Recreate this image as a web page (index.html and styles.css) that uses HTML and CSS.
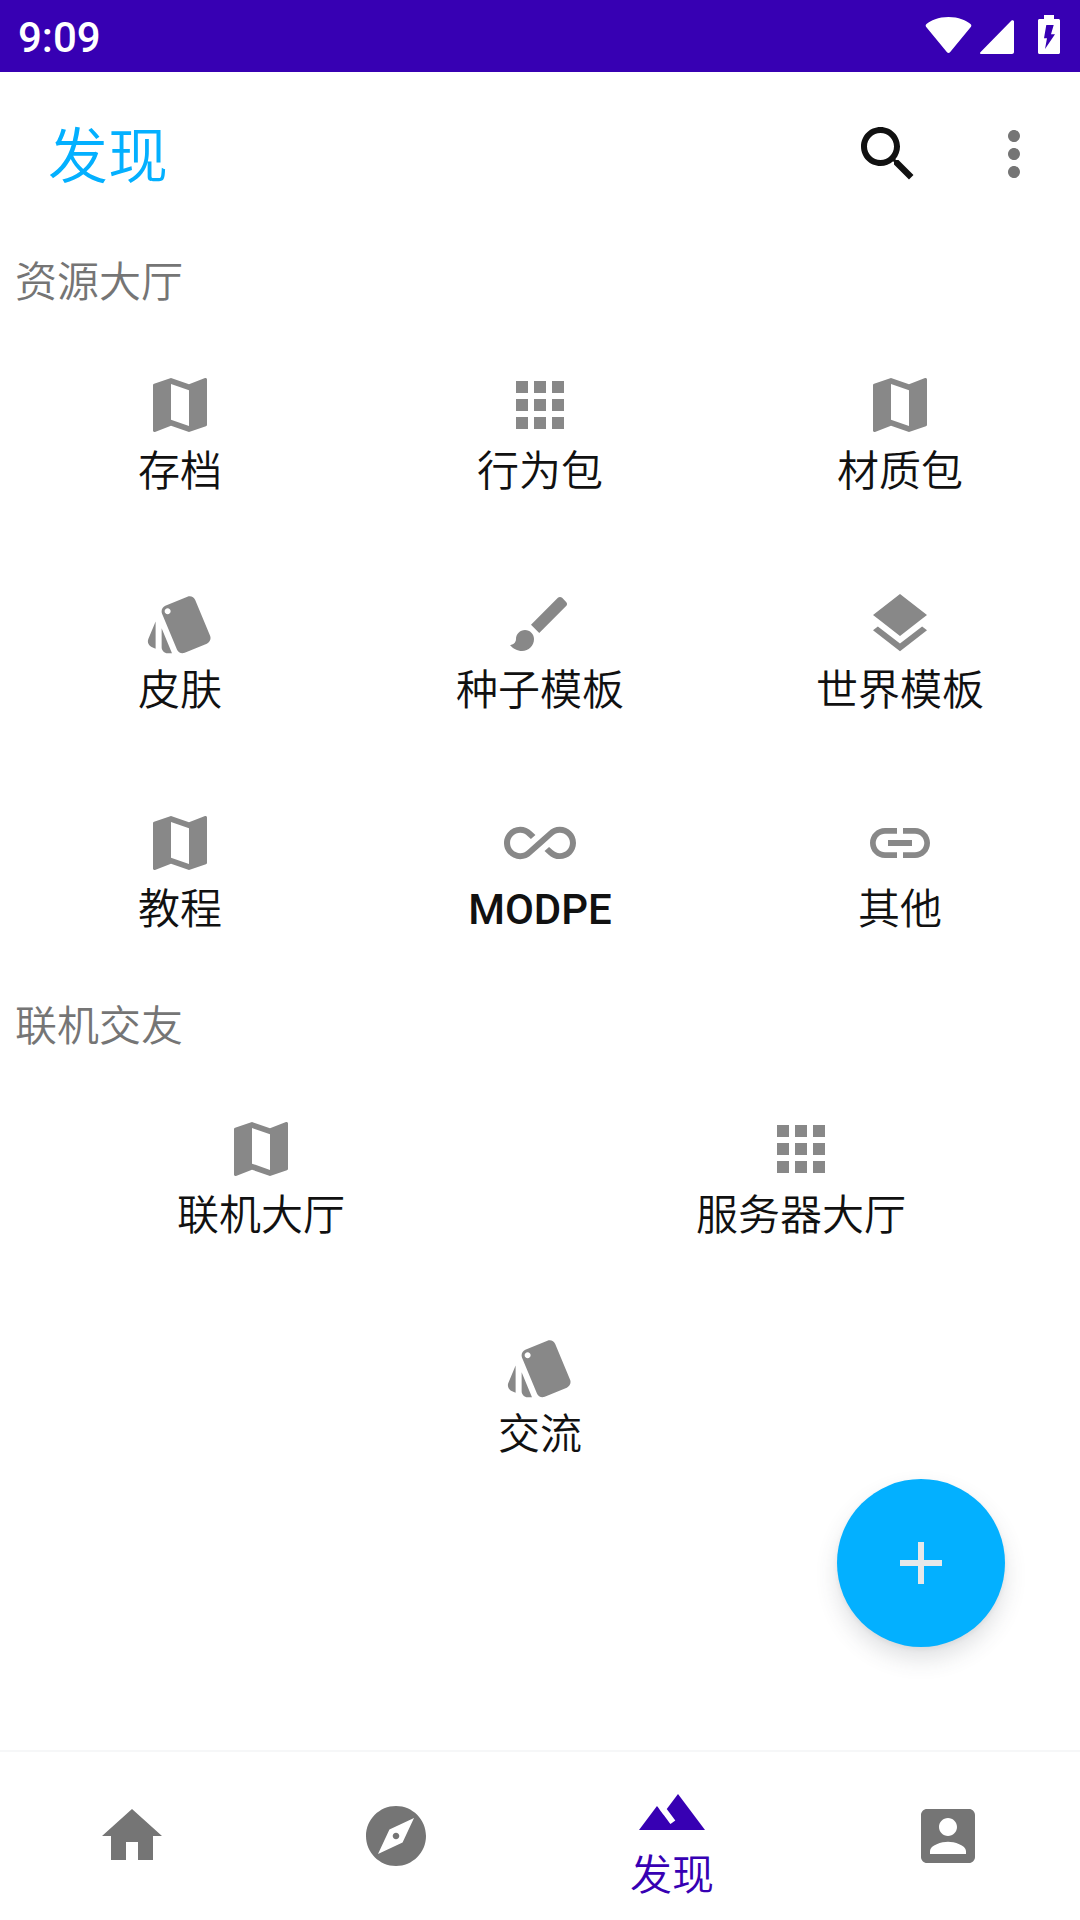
FILE: index.html
```html
<!DOCTYPE html>
<html>
	<head>
		<meta charset="utf-8">
		<title>发现</title>
		<link rel="stylesheet" href="styles.css">
	</head>
	<body>
	<svg class="defs" width="0" height="0">
		<symbol id="i-map" viewBox="0 0 24 24"><path d="M20.5 3l-.16.03L15 5.1 9 3 3.36 4.9c-.21.07-.36.25-.36.48V20.5c0 .28.22.5.5.5l.16-.03L9 18.9l6 2.1 5.64-1.9c.21-.07.36-.25.36-.48V3.5c0-.28-.22-.5-.5-.5zM15 19l-6-2.11V5l6 2.11V19z"/></symbol>
		<symbol id="i-apps" viewBox="0 0 24 24"><path d="M4 8h4V4H4v4zm6 12h4v-4h-4v4zm-6 0h4v-4H4v4zm0-6h4v-4H4v4zm6 0h4v-4h-4v4zm6-10v4h4V4h-4zm-6 4h4V4h-4v4zm6 6h4v-4h-4v4zm0 6h4v-4h-4v4z"/></symbol>
		<symbol id="i-style" viewBox="0 0 24 24"><path d="M2.53 19.65l1.34.56v-9.03l-2.43 5.86c-.41 1.02.08 2.19 1.09 2.61zm19.5-3.7L17.07 3.98c-.31-.75-1.04-1.21-1.81-1.23-.26 0-.53.04-.79.15L7.1 5.95c-.75.31-1.21 1.03-1.23 1.8-.01.27.04.54.15.8l4.96 11.97c.31.76 1.05 1.22 1.83 1.23.26 0 .52-.05.77-.15l7.36-3.05c1.02-.42 1.51-1.59 1.09-2.6zM7.88 8.75c-.55 0-1-.45-1-1s.45-1 1-1 1 .45 1 1-.45 1-1 1zm-2 11c0 1.1.9 2 2 2h1.45l-3.45-8.34v6.34z"/></symbol>
		<symbol id="i-brush" viewBox="0 0 24 24"><path d="M7 14c-1.66 0-3 1.34-3 3 0 1.31-1.16 2-2 2 .92 1.22 2.49 2 4 2 2.21 0 4-1.79 4-4 0-1.66-1.34-3-3-3zm13.71-9.37l-1.34-1.34c-.39-.39-1.02-.39-1.41 0L9 12.25 11.75 15l8.96-8.96c.39-.39.39-1.02 0-1.41z"/></symbol>
		<symbol id="i-layers" viewBox="0 0 24 24"><path d="M11.99 18.54l-7.37-5.73L3 14.07l9 7 9-7-1.63-1.27-7.38 5.74zM12 16l7.36-5.73L21 9l-9-7-9 7 1.63 1.27L12 16z"/></symbol>
		<symbol id="i-infinity" viewBox="0 0 24 24"><path d="M18.6 6.62c-1.44 0-2.8.56-3.77 1.53L12 10.66 10.48 12h.01L7.8 14.39c-.64.64-1.49.99-2.4.99-1.87 0-3.39-1.51-3.39-3.38S3.53 8.62 5.4 8.62c.91 0 1.76.35 2.44 1.03l1.13 1 1.51-1.34L9.22 8.2C8.2 7.18 6.84 6.62 5.4 6.62 2.42 6.62 0 9.04 0 12s2.42 5.38 5.4 5.38c1.44 0 2.8-.56 3.77-1.53l2.83-2.5.01.01L13.52 12h-.01l2.69-2.39c.64-.64 1.49-.99 2.4-.99 1.87 0 3.39 1.51 3.39 3.38s-1.52 3.38-3.39 3.38c-.9 0-1.76-.35-2.44-1.03l-1.14-1.01-1.51 1.34 1.27 1.12c1.02 1.01 2.37 1.57 3.82 1.57 2.98 0 5.4-2.41 5.4-5.38s-2.42-5.37-5.4-5.37z"/></symbol>
		<symbol id="i-link" viewBox="0 0 24 24"><path d="M3.9 12c0-1.71 1.39-3.1 3.1-3.1h4V7H7c-2.76 0-5 2.24-5 5s2.24 5 5 5h4v-1.9H7c-1.71 0-3.1-1.39-3.1-3.1zM8 13h8v-2H8v2zm9-6h-4v1.9h4c1.71 0 3.1 1.39 3.1 3.1s-1.39 3.1-3.1 3.1h-4V17h4c2.76 0 5-2.24 5-5s-2.24-5-5-5z"/></symbol>
	</svg>

	<div id="wrapper">
		<div class="statusbar">
			<span class="time">9:09</span>
			<div class="status-icons">
				<svg class="st-wifi" viewBox="0 0 47 36"><path d="M22 35.200L1.200 10C.4 9 .5 7.800 1.500 7 5.500 3.400 13.500 0 23.500 0s18 3.400 22 7c1 .8 1.100 2 .3 3L25 35.200c-.8 1-2.200 1-3 0z"/></svg>
				<svg class="st-signal" viewBox="0 0 34 34"><path d="M1 34c-1 0-1.300-1-.6-1.700L31.500.6C32.400-.3 34 .3 34 1.600V32c0 1.100-.9 2-2 2z"/></svg>
				<svg class="st-battery" viewBox="0 0 22 39"><path fill-rule="evenodd" d="M6 0h10v4h4.500c.8 0 1.500.7 1.500 1.500V37.500c0 .8-.7 1.500-1.500 1.500H1.500C.7 39 0 38.300 0 37.500V5.500C0 4.700.7 4 1.500 4H6zM8.300 10h7.400L13 19.300h4L7 34l2-10.700H6z"/></svg>
			</div>
		</div>

		<div class="toolbar">
			<h1>发现</h1>
			<svg class="tb-search" viewBox="0 0 24 24"><path d="M15.500 14h-.79l-.28-.27C15.410 12.590 16 11.110 16 9.500 16 5.910 13.090 3 9.500 3S3 5.910 3 9.500 5.910 16 9.500 16c1.610 0 3.090-.59 4.230-1.570l.27.28v.79l5 4.990L20.490 19l-4.990-5zm-6 0C7.010 14 5 11.990 5 9.500S7.010 5 9.500 5 14 7.010 14 9.500 11.990 14 9.500 14z"/></svg>
			<svg class="tb-more" viewBox="0 0 24 24"><path d="M12 8c1.100 0 2-.9 2-2s-.9-2-2-2-2 .9-2 2 .9 2 2 2zm0 2c-1.100 0-2 .9-2 2s.9 2 2 2 2-.9 2-2-.9-2-2-2zm0 6c-1.100 0-2 .9-2 2s.9 2 2 2 2-.9 2-2-.9-2-2-2z"/></svg>
		</div>

		<div class="content">
			<h3>资源大厅</h3>
			<div class="grid">
				<div class="item"><svg class="icon"><use href="#i-map"/></svg><span>存档</span></div>
				<div class="item"><svg class="icon"><use href="#i-apps"/></svg><span>行为包</span></div>
				<div class="item"><svg class="icon"><use href="#i-map"/></svg><span>材质包</span></div>
				<div class="item"><svg class="icon"><use href="#i-style"/></svg><span>皮肤</span></div>
				<div class="item"><svg class="icon"><use href="#i-brush"/></svg><span>种子模板</span></div>
				<div class="item"><svg class="icon"><use href="#i-layers"/></svg><span>世界模板</span></div>
				<div class="item"><svg class="icon"><use href="#i-map"/></svg><span>教程</span></div>
				<div class="item"><svg class="icon"><use href="#i-infinity"/></svg><span class="latin">MODPE</span></div>
				<div class="item"><svg class="icon"><use href="#i-link"/></svg><span>其他</span></div>
			</div>
			<h3>联机交友</h3>
			<div class="grid-two">
				<div class="item"><svg class="icon"><use href="#i-map"/></svg><span>联机大厅</span></div>
				<div class="item"><svg class="icon"><use href="#i-apps"/></svg><span>服务器大厅</span></div>
				<div class="item wide"><svg class="icon"><use href="#i-style"/></svg><span>交流</span></div>
			</div>
		</div>

		<div class="fab"><span class="plus"></span></div>

		<div class="bottomnav">
			<div class="tab"><svg viewBox="0 0 24 24"><path d="M10 20v-6h4v6h5v-8h3L12 3 2 12h3v8z"/></svg></div>
			<div class="tab"><svg viewBox="0 0 24 24"><path d="M12 10.900c-.61 0-1.100.49-1.100 1.100s.49 1.100 1.100 1.100c.61 0 1.100-.49 1.100-1.100s-.49-1.100-1.100-1.100zM12 2C6.480 2 2 6.480 2 12s4.480 10 10 10 10-4.480 10-10S17.520 2 12 2zm2.190 12.190L6 18l3.810-8.190L18 6l-3.810 8.190z"/></svg></div>
			<div class="tab active"><svg viewBox="0 0 24 24"><path d="M14 6l-3.750 5 2.850 3.800-1.600 1.200C9.810 13.750 7 10 7 10l-6 8h22L14 6z"/></svg><span>发现</span></div>
			<div class="tab"><svg viewBox="0 0 24 24"><path d="M3 5v14c0 1.100.89 2 2 2h14c1.100 0 2-.9 2-2V5c0-1.100-.9-2-2-2H5c-1.110 0-2 .9-2 2zm12 4c0 1.660-1.340 3-3 3s-3-1.340-3-3 1.340-3 3-3 3 1.340 3 3zm-9 8c0-2 4-3.100 6-3.100s6 1.100 6 3.100v1H6v-1z"/></svg></div>
		</div>
	</div>
	</body>
</html>
```

FILE: styles.css
```css
body {
	background-color: #fff;
	color: #111;
	font: 350 42px Roboto, "Noto Sans CJK SC", sans-serif;
	margin: 0;
}
h1, h3 {
	font-weight: 350;
	margin: 0;
}
.defs {
	display: block;
	height: 0;
	width: 0;
}
#wrapper {
	display: flex;
	flex-direction: column;
	height: 1920px;
	overflow: hidden;
	position: relative;
	width: 1080px;
}

.statusbar {
	align-items: center;
	background-color: #3700b3;
	color: #fff;
	display: flex;
	flex: none;
	height: 72px;
	justify-content: space-between;
	padding: 0 20px 0 18px;
	box-sizing: border-box;
}
.time {
	font-weight: 500;
	line-height: 72px;
	padding-top: 3px;
}
.status-icons {
	align-items: flex-end;
	display: flex;
	fill: #fff;
	height: 39px;
	margin-top: -3px;
}
.st-wifi { height: 36px; margin-bottom: 1px; width: 47px; }
.st-signal { height: 34px; margin-left: 8px; width: 34px; }
.st-battery { height: 39px; margin-left: 24px; width: 22px; }

.toolbar {
	align-items: center;
	display: flex;
	flex: none;
	height: 165px;
	padding: 0 30px 0 48px;
}
.toolbar h1 {
	color: #03b0ff;
	flex: 1;
	font-size: 60px;
	margin-bottom: 7px;
}
.tb-search { fill: #111; height: 72px; margin: 0 54px 1px 0; width: 72px; }
.tb-more { fill: #757575; height: 72px; margin-bottom: 1px; width: 72px; }

.content {
	flex: 1;
}
.content h3 {
	color: #757575;
	font-size: 42px;
	line-height: 83px;
	padding: 4px 0 0 15px;
}
.grid {
	display: grid;
	grid-template-columns: repeat(3, 360px);
}
.grid-two {
	display: grid;
	grid-template-columns: 522px 558px;
}
.item {
	align-items: center;
	display: flex;
	flex-direction: column;
	height: 219px;
	padding-top: 45px;
	box-sizing: border-box;
}
.item.wide {
	grid-column: 1 / 3;
}
.item span {
	line-height: 57px;
	margin-top: 2px;
}
.item .latin {
	font-weight: 500;
}
.icon {
	fill: #888;
	flex: none;
	height: 72px;
	width: 72px;
}

.fab {
	align-items: center;
	background-color: #03b0ff;
	border-radius: 50%;
	bottom: 273px;
	box-shadow: 0 12px 22px rgba(60, 70, 80, .16), 0 2px 5px rgba(0, 0, 0, .06);
	display: flex;
	height: 168px;
	justify-content: center;
	position: absolute;
	right: 75px;
	width: 168px;
}
.plus {
	background: linear-gradient(#e6e8ea, #e6e8ea) center / 42px 6px no-repeat,
		linear-gradient(#e6e8ea, #e6e8ea) center / 6px 42px no-repeat;
	height: 42px;
	width: 42px;
}

.bottomnav {
	border-top: 2px solid #f6f7f8;
	display: grid;
	flex: none;
	grid-template-columns: 264px 264px 288px 264px;
	height: 170px;
	box-sizing: border-box;
}
.tab {
	align-items: center;
	display: flex;
	fill: #757575;
	flex-direction: column;
	justify-content: center;
}
.tab svg {
	flex: none;
	height: 72px;
	width: 72px;
}
.tab.active {
	color: #3700b3;
	fill: #3700b3;
	justify-content: flex-start;
	padding-top: 24px;
}
.tab.active span {
	line-height: 55px;
}
```
